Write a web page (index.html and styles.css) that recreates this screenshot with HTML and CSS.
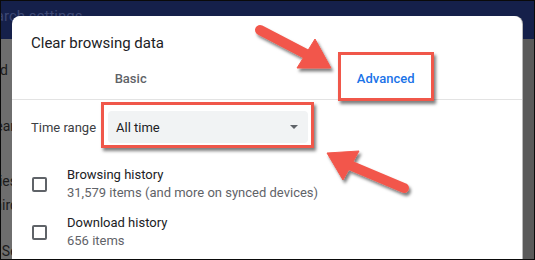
FILE: index.html
```html
<!DOCTYPE html>
<html>
<head>
<meta charset="utf-8">
<link rel="stylesheet" href="styles.css">
</head>
<body>
<div class="screen">
  <div class="page">
    <div class="topbar"><span class="search">Search settings</span></div>
    <div class="under">
      <div class="leftcol">
        <div class="bg-line l1">Passwords and</div>
        <div class="bg-line l2">Clear</div>
        <div class="bg-line l3">Cookies</div>
        <div class="bg-line l4">Third</div>
        <div class="bg-line l5">Security</div>
      </div>
      <div class="rightcol"></div>
    </div>
  </div>

  <div class="dialog">
    <div class="title">Clear browsing data</div>
    <div class="tabs">
      <div class="tab tab-basic">Basic</div>
      <div class="tab tab-adv">Advanced</div>
    </div>
    <div class="range">
      <span class="range-label">Time range</span>
      <div class="select"><span>All time</span><span class="caret"></span></div>
    </div>
    <div class="items">
      <div class="item">
        <span class="checkbox"></span>
        <div class="item-text">
          <div class="item-title">Browsing history</div>
          <div class="item-sub">31,579 items (and more on synced devices)</div>
        </div>
      </div>
      <div class="item">
        <span class="checkbox"></span>
        <div class="item-text">
          <div class="item-title">Download history</div>
          <div class="item-sub">656 items</div>
        </div>
      </div>
    </div>
  </div>

  <div class="mark mark-adv"></div>
  <div class="mark mark-range"></div>

  <svg class="arrows" width="535" height="260" viewBox="0 0 535 260">
    <defs>
      <filter id="sh" x="-20%" y="-20%" width="140%" height="140%">
        <feDropShadow dx="2" dy="3" stdDeviation="1.5" flood-color="#000" flood-opacity="0.5"/>
      </filter>
    </defs>
    <g filter="url(#sh)" fill="#f2574b" stroke="#f2574b">
      <line x1="260" y1="30" x2="308" y2="55" stroke-width="10" stroke-linecap="round"/>
      <polygon points="315,39 297,68 331,68" stroke-width="1" stroke-linejoin="round"/>
      <line x1="347" y1="164" x2="404" y2="188" stroke-width="10" stroke-linecap="round"/>
      <polygon points="327,153 359,151 343,180" stroke-width="1" stroke-linejoin="round"/>
    </g>
  </svg>
</div>
</body>
</html>
```

FILE: styles.css
```css
* { box-sizing: border-box; }
html, body { margin: 0; padding: 0; }
body { background: #000; font-family: Roboto, "Liberation Sans", Arial, sans-serif; }

.screen {
  position: relative;
  width: 535px;
  height: 260px;
  border: 1px solid #0a0a0a;
  overflow: hidden;
  background: #5a5a5a;
}

.page { display: flex; flex-direction: column; height: 100%; }
.topbar {
  height: 41px;
  background: #15204a;
  padding-top: 5px;
  overflow: hidden;
  white-space: nowrap;
}
.search {
  display: inline-block;
  margin-left: -22px;
  font-size: 15px;
  line-height: 18px;
  color: #3d4874;
}
.under { flex: 1; display: flex; }
.leftcol {
  width: 11px;
  background: #6e6e6e;
  overflow: hidden;
  white-space: nowrap;
  direction: rtl;
  font-size: 14px;
  line-height: 16px;
  color: #1c1c1c;
}
.bg-line { text-align: right; margin-right: 4px; }
.l1 { margin-top: 23px; }
.l2 { margin-top: 40px; margin-right: -3px; }
.l3 { margin-top: 39px; margin-right: -5px; }
.l4 { margin-top: 8px; margin-right: -6px; }
.l5 { margin-top: 30px; margin-right: -40px; }
.rightcol { flex: 1; background: #5a5a5a; }

.dialog {
  position: absolute;
  left: 11px;
  top: 15px;
  width: 510px;
  height: 280px;
  background: #fff;
  border-radius: 8px;
  box-shadow: 1px 0 0 #b8b8b8;
}
.title {
  padding: 17px 19px 0;
  font-size: 15px;
  line-height: 20px;
  color: #202124;
}
.tabs {
  display: flex;
  border-bottom: 1px solid #e3e3e3;
}
.tab {
  padding: 18px 0 12px;
  font-size: 13px;
  line-height: 16px;
  font-weight: 500;
  text-align: center;
}
.tab-basic { width: 242px; color: #5f6368; }
.tab-adv { width: 278px; color: #1a73e8; }

.range {
  display: flex;
  align-items: center;
  padding: 11px 0 0 19px;
}
.range-label {
  width: 77px;
  font-size: 13px;
  color: #3c4043;
}
.select {
  width: 200px;
  height: 32px;
  background: #f1f3f4;
  border-radius: 4px;
  display: flex;
  align-items: center;
  justify-content: space-between;
  padding: 0 10px 0 8px;
  font-size: 13px;
  color: #202124;
}
.caret {
  width: 0; height: 0;
  border-left: 4px solid transparent;
  border-right: 4px solid transparent;
  border-top: 4px solid #5f6368;
}

.items { margin-top: 17px; }
.item {
  display: flex;
  align-items: center;
  padding: 6px 0 6px 20px;
}
.checkbox {
  width: 15px;
  height: 15px;
  border: 2px solid #5f6368;
  border-radius: 2px;
  margin-right: 20px;
  margin-top: 1px;
}
.item-text { font-size: 13px; line-height: 18px; }
.item-title { color: #202124; }
.item-sub { color: #5f6368; }

.mark {
  position: absolute;
  border: 3px solid #f0574a;
  box-shadow: 2px 3px 3px rgba(0,0,0,0.5);
}
.mark-adv { left: 337px; top: 51px; width: 96px; height: 49px; }
.mark-range { left: 100px; top: 101px; width: 213px; height: 46px; }

.arrows { position: absolute; left: -1px; top: -1px; }
```
